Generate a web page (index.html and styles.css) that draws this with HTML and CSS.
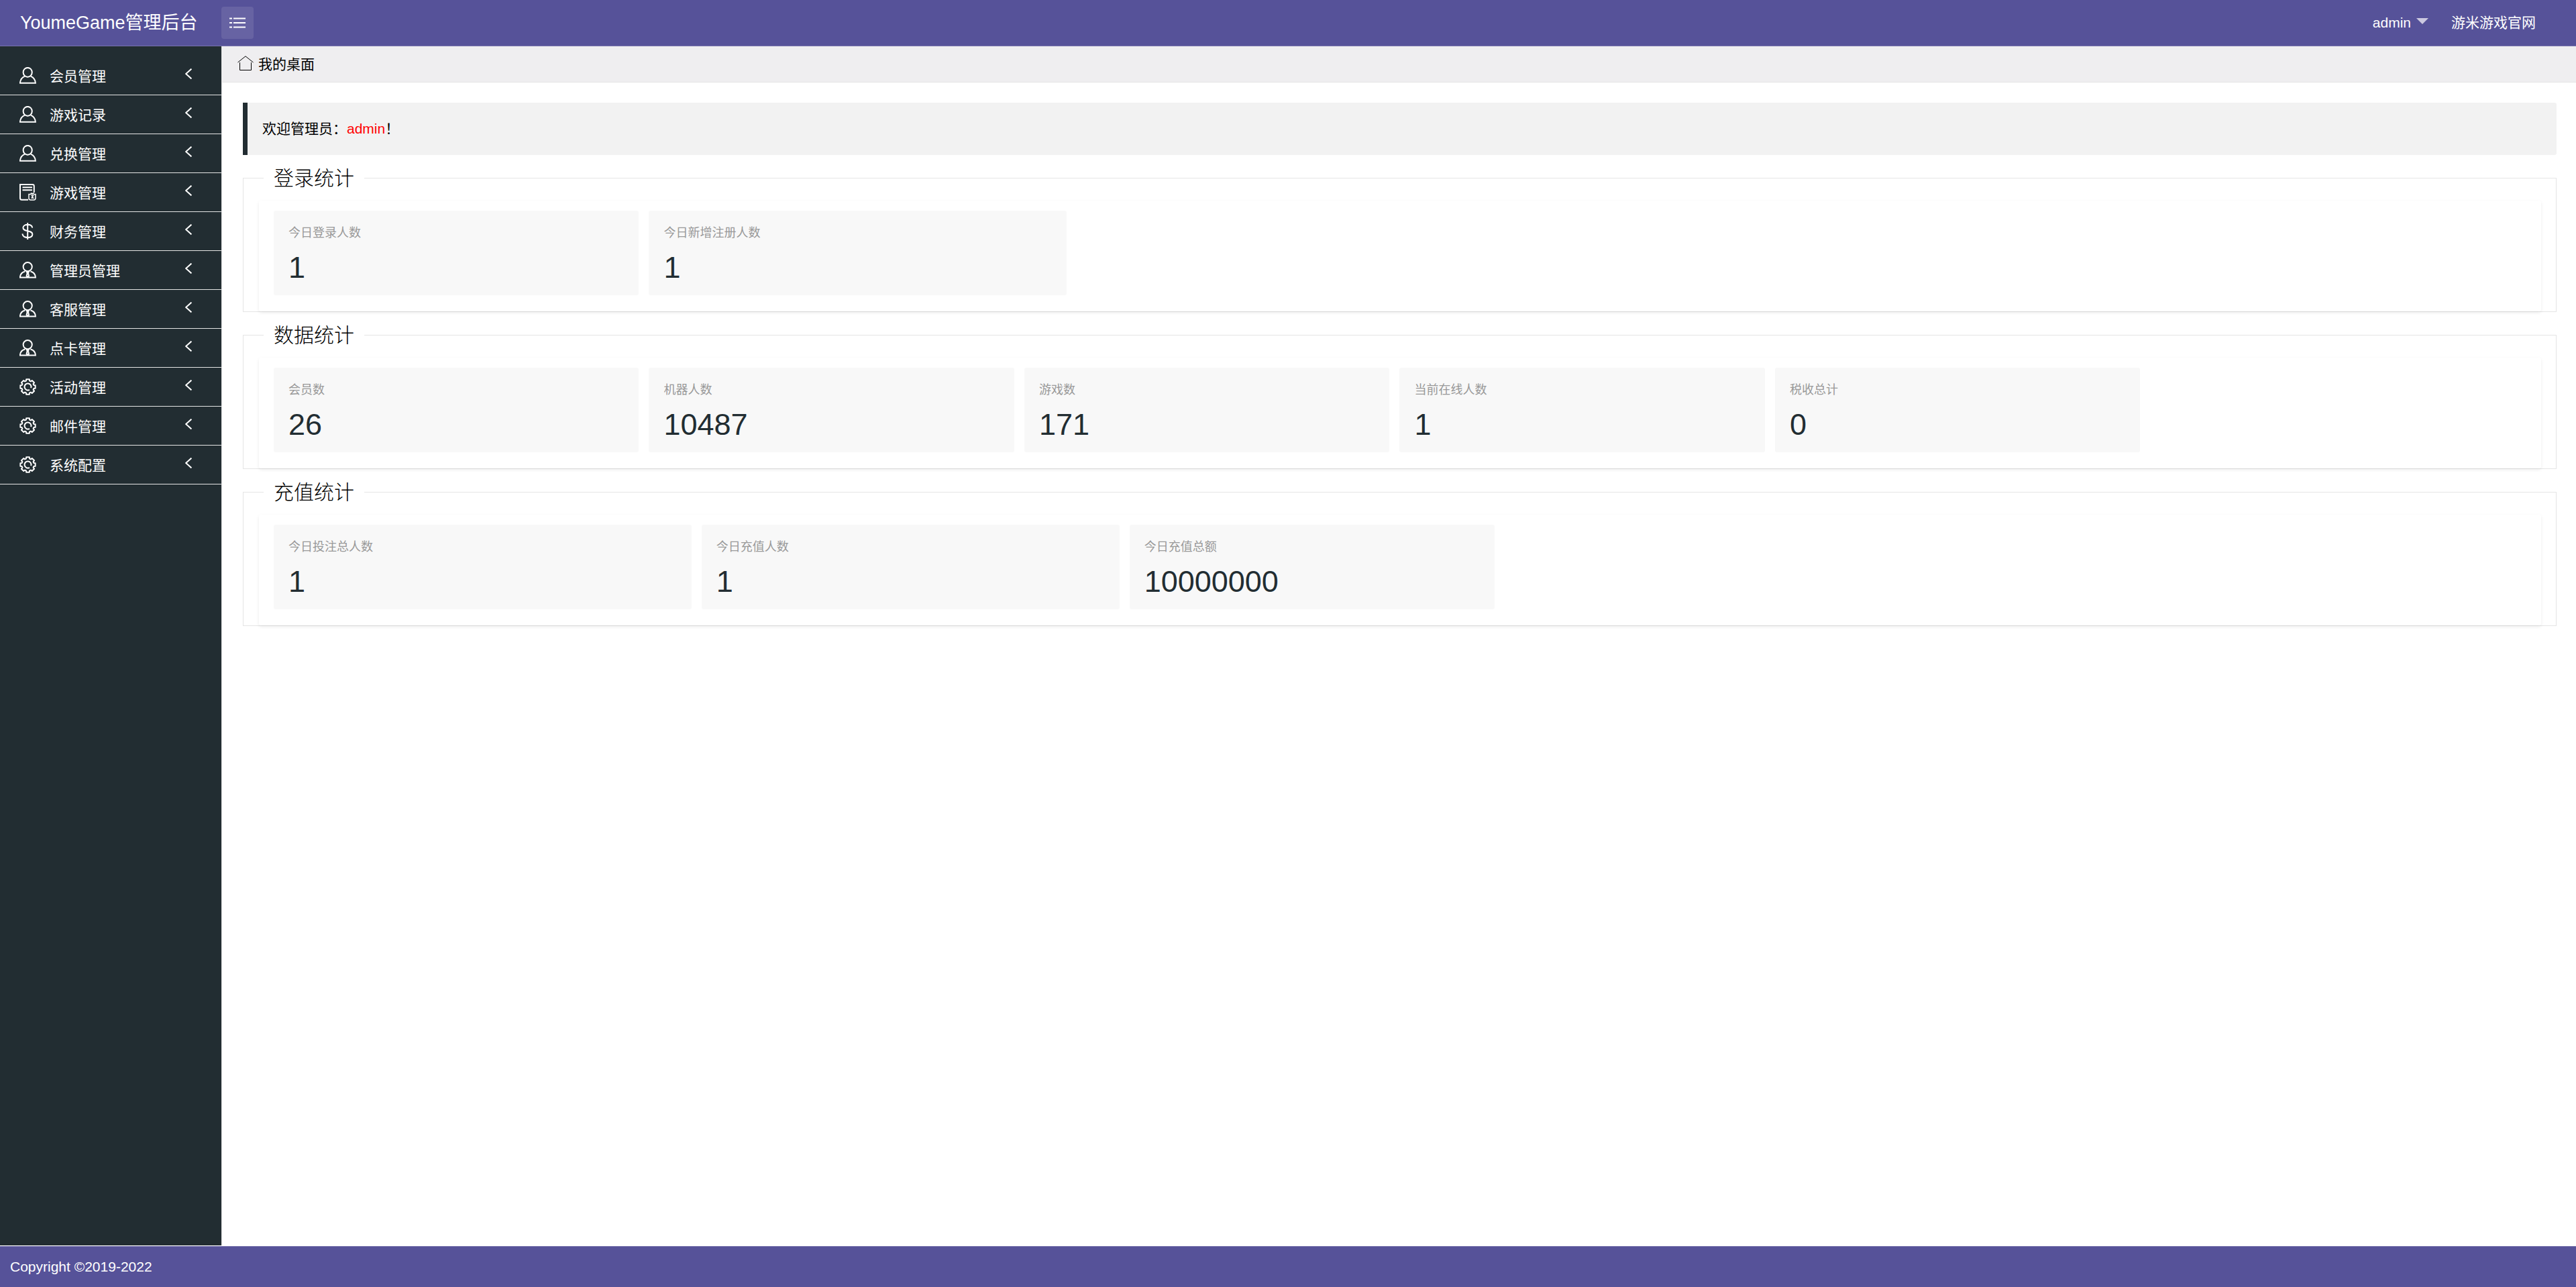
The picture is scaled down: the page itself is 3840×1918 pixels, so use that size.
FILE: index.html
```html
<!DOCTYPE html>
<html lang="zh-CN">
<head>
<meta charset="utf-8">
<meta name="viewport" content="width=device-width, initial-scale=1">
<title>YoumeGame管理后台</title>
<link rel="stylesheet" href="styles.css">
</head>
<body>
<svg class="sprite" aria-hidden="true">
  <symbol id="i-user" viewBox="0 0 25 25"><ellipse cx="12.200" cy="7.800" rx="6.600" ry="6.900"/><path d="M8 13.600C3.800 15.400 1.200 18.500.9 23.800h23c-.3-5.300-2.900-8.400-7.100-10.200"/></symbol>
  <symbol id="i-admin" viewBox="0 0 25 25"><circle cx="12.200" cy="7.600" r="6.600"/><path d="M8.300 14.400C3.800 15.400 1.200 18.500.9 23.400h23c-.3-4.900-2.900-8-7.400-9M11 15.200h2.600l-.6 2 1 4-1.700 2-1.700-2 1-4z"/></symbol>
  <symbol id="i-form" viewBox="0 0 25 25"><path d="M13 23.800H3.500Q1 23.800 1 21.300V1h18.500q2.300 0 2.300 2.300V13M4.500 5.300h14.500M4.500 9.300h14.500"/><path d="M14 15.500h2.500l1.200-1.500 1.300 1.500 1.300-1.500 1.200 1.500H24v5.500q0 3-2.500 3h-5q-2.500 0-2.500-3zM17.500 17.500h3l-1.500 2 1.500 1.500h-3" stroke-width="1.500"/></symbol>
  <symbol id="i-dollar" viewBox="0 0 25 25"><path d="M12.200 0v25M19.200 7.500C19 4.500 16 2.700 12.200 2.700S5.400 4.500 5.400 7.500c0 6.400 14 3 14 9.500 0 3.300-3 5-7.200 5s-7.600-2-7.800-5.600"/></symbol>
  <symbol id="i-gear" viewBox="-12.500 -12.500 25 25"><path stroke-linejoin="round" d="M11.150-2.370V2.370L8.820 2.610 8.080 4.390 9.560 6.210 6.210 9.560 4.390 8.080 2.610 8.820 2.370 11.150H-2.370L-2.610 8.820-4.390 8.080-6.210 9.560-9.560 6.210-8.080 4.390-8.820 2.610-11.150 2.370V-2.370L-8.820-2.610-8.080-4.390-9.560-6.210-6.210-9.560-4.390-8.080-2.610-8.820-2.370-11.150H2.370L2.610-8.820 4.390-8.080 6.210-9.560 9.560-6.210 8.080-4.390 8.820-2.610z"/><path d="M2.500 4.300A5 5 0 1 1 4.700 1.700"/></symbol>
  <symbol id="i-left" viewBox="0 0 10 16"><path d="M9.400.6 1.200 8l8.200 7.400"/></symbol>
</svg>

<header class="topbar">
  <a class="logo" href="#">YoumeGame管理后台</a>
  <button class="toggle" type="button" aria-label="菜单">
    <svg class="list-icon" viewBox="0 0 24 16"><path d="M0 1.500h4M6 1.500h18M0 8h4M6 8h18M0 14.500h4M6 14.500h18"/></svg>
  </button>
  <nav class="topnav">
    <button class="account" type="button">admin<span class="caret"></span></button>
    <a href="#">游米游戏官网</a>
  </nav>
</header>

<div class="body">
  <nav class="sidebar">
    <ul class="menu">
      <li><button type="button"><svg class="icon"><use href="#i-user"/></svg><span>会员管理</span><svg class="arrow"><use href="#i-left"/></svg></button></li>
      <li><button type="button"><svg class="icon"><use href="#i-user"/></svg><span>游戏记录</span><svg class="arrow"><use href="#i-left"/></svg></button></li>
      <li><button type="button"><svg class="icon"><use href="#i-user"/></svg><span>兑换管理</span><svg class="arrow"><use href="#i-left"/></svg></button></li>
      <li><button type="button"><svg class="icon"><use href="#i-form"/></svg><span>游戏管理</span><svg class="arrow"><use href="#i-left"/></svg></button></li>
      <li><button type="button"><svg class="icon"><use href="#i-dollar"/></svg><span>财务管理</span><svg class="arrow"><use href="#i-left"/></svg></button></li>
      <li><button type="button"><svg class="icon"><use href="#i-admin"/></svg><span>管理员管理</span><svg class="arrow"><use href="#i-left"/></svg></button></li>
      <li><button type="button"><svg class="icon"><use href="#i-admin"/></svg><span>客服管理</span><svg class="arrow"><use href="#i-left"/></svg></button></li>
      <li><button type="button"><svg class="icon"><use href="#i-admin"/></svg><span>点卡管理</span><svg class="arrow"><use href="#i-left"/></svg></button></li>
      <li><button type="button"><svg class="icon"><use href="#i-gear"/></svg><span>活动管理</span><svg class="arrow"><use href="#i-left"/></svg></button></li>
      <li><button type="button"><svg class="icon"><use href="#i-gear"/></svg><span>邮件管理</span><svg class="arrow"><use href="#i-left"/></svg></button></li>
      <li><button type="button"><svg class="icon"><use href="#i-gear"/></svg><span>系统配置</span><svg class="arrow"><use href="#i-left"/></svg></button></li>
    </ul>
  </nav>

  <main class="main">
    <div class="tabs">
      <svg class="home-icon" viewBox="0 0 24 22"><path d="M.5 10 12 .8 23.500 10M3.500 10v11.500h17V10"/></svg>
      <span>我的桌面</span>
    </div>
    <div class="content">
      <blockquote class="welcome">欢迎管理员：<span class="name">admin</span>！</blockquote>

      <fieldset class="group">
        <legend>登录统计</legend>
        <div class="card">
          <a class="cell" href="#"><span class="tile"><span class="label">今日登录人数</span><span class="value">1</span></span></a>
          <a class="cell wide" href="#"><span class="tile"><span class="label">今日新增注册人数</span><span class="value">1</span></span></a>
        </div>
      </fieldset>

      <fieldset class="group">
        <legend>数据统计</legend>
        <div class="card">
          <a class="cell" href="#"><span class="tile"><span class="label">会员数</span><span class="value">26</span></span></a>
          <a class="cell" href="#"><span class="tile"><span class="label">机器人数</span><span class="value">10487</span></span></a>
          <a class="cell" href="#"><span class="tile"><span class="label">游戏数</span><span class="value">171</span></span></a>
          <a class="cell" href="#"><span class="tile"><span class="label">当前在线人数</span><span class="value">1</span></span></a>
          <a class="cell" href="#"><span class="tile"><span class="label">税收总计</span><span class="value">0</span></span></a>
        </div>
      </fieldset>

      <fieldset class="group">
        <legend>充值统计</legend>
        <div class="card">
          <a class="cell wide" href="#"><span class="tile"><span class="label">今日投注总人数</span><span class="value">1</span></span></a>
          <a class="cell wide" href="#"><span class="tile"><span class="label">今日充值人数</span><span class="value">1</span></span></a>
          <a class="cell" href="#"><span class="tile"><span class="label">今日充值总额</span><span class="value">10000000</span></span></a>
        </div>
      </fieldset>
    </div>
  </main>
</div>

<footer class="footer">Copyright ©2019-2022</footer>
</body>
</html>
```

FILE: styles.css
```css
* {
  box-sizing: border-box;
}

body {
  display: flex;
  flex-direction: column;
  min-height: 100vh;
  margin: 0;
  background: #fff;
  color: #000;
  font: 21px/32px "Liberation Sans", "Noto Sans CJK SC", sans-serif;
}

a {
  color: inherit;
  text-decoration: none;
}

button {
  padding: 0;
  border: 0;
  background: none;
  color: inherit;
  font: inherit;
  cursor: pointer;
}

svg {
  display: block;
  fill: none;
  stroke: currentColor;
  stroke-width: 2;
}

.sprite {
  position: absolute;
  width: 0;
  height: 0;
}

/* Top bar */
.topbar {
  display: flex;
  align-items: center;
  height: 69px;
  border-bottom: 1px solid #7773ad;
  background: #565299;
  color: #fff;
}

.logo {
  width: 330px;
  padding-left: 30px;
  font-size: 27px;
}

.toggle {
  display: flex;
  align-items: center;
  justify-content: center;
  width: 48px;
  height: 48px;
  border-radius: 4px;
  background: #6763a3;
}

.list-icon {
  width: 24px;
  height: 16px;
}

.topnav {
  display: flex;
  align-items: center;
  gap: 34px;
  margin-left: auto;
  padding-right: 60px;
}

.account {
  display: flex;
  align-items: center;
  gap: 8px;
}

.caret {
  margin-bottom: 6px;
  border: 9px solid transparent;
  border-top-color: #ccc9e0;
  border-bottom: 0;
}

/* Page body */
.body {
  display: flex;
  flex: 1;
}

.sidebar {
  flex: none;
  width: 331px;
  padding-top: 15px;
  border-right: 1px solid #e5e5e5;
  background: #222d32;
  background-clip: padding-box;
  color: #fff;
}

.menu {
  margin: 0;
  padding: 0;
  list-style: none;
}

.menu button {
  display: flex;
  align-items: center;
  width: 100%;
  height: 58px;
  padding: 0 44px 0 29px;
  border-bottom: 1px solid #e5e5e5;
  text-align: left;
}

.menu span {
  padding-top: 2px;
}

.icon {
  width: 25px;
  height: 25px;
  margin-right: 20px;
}

.arrow {
  width: 10px;
  height: 16px;
  margin: 0 0 5px auto;
}

.main {
  flex: 1;
  min-width: 0;
}

.tabs {
  display: flex;
  align-items: center;
  gap: 7px;
  height: 54px;
  padding-left: 23px;
  border-bottom: 1px solid #e5e5e5;
  background: #efeef0;
}

.home-icon {
  width: 24px;
  height: 22px;
  margin-bottom: 4px;
  stroke-width: 1;
}

.content {
  padding: 30px 29px 30px 31px;
}

.welcome {
  margin: 0;
  padding: 23px 22px;
  border-left: 7px solid #222d32;
  border-radius: 0 3px 3px 0;
  background: #f2f2f2;
}

.name {
  color: #f00;
}

/* Statistics groups */
.group {
  min-width: 0;
  margin: 12px 0 0;
  padding: 0;
  border: 1px solid #e5e5e5;
}

.group legend {
  margin-left: 30px;
  padding: 0 15px;
  font-size: 30px;
  font-weight: 300;
  line-height: 45px;
}

.card {
  display: flex;
  margin: 11px 22px 0 23px;
  padding: 15px 31px 24px 14px;
  border-radius: 3px;
  box-shadow: 0 2px 5px rgba(0, 0, 0, 0.08);
}

.cell {
  flex: none;
  width: calc(100% / 6);
  padding: 0 7px 0 8px;
}

.cell.wide {
  width: 19%;
}

.tile {
  display: flex;
  flex-direction: column;
  gap: 14px;
  height: 126px;
  padding: 18px 22px;
  border-radius: 3px;
  background: #f8f8f8;
}

.label {
  color: #999;
  font-size: 18px;
  line-height: 30px;
}

.value {
  color: #222d32;
  font-size: 45px;
  line-height: 45px;
}

/* Footer */
.footer {
  margin-top: 1px;
  padding: 14px 15px;
  border-top: 1px solid #7773ad;
  background: #565299;
  color: #fff;
}
```
